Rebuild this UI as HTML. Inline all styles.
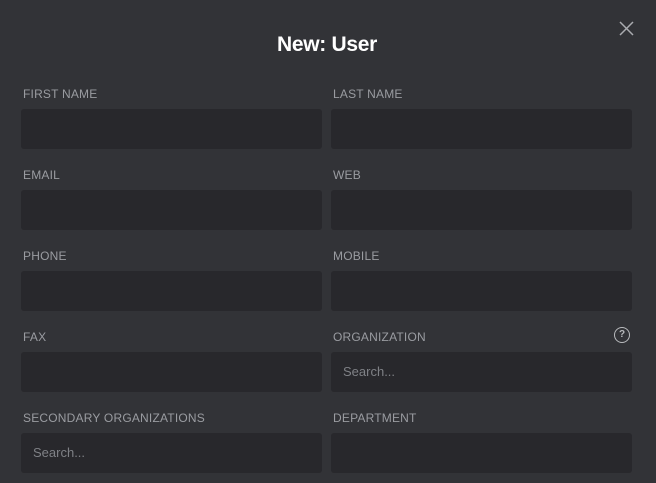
<!DOCTYPE html>
<html><head><style>
body{margin:0;width:656px;height:483px;background:#323337;font-family:"Liberation Sans",sans-serif;overflow:hidden;position:relative}
h1{position:absolute;left:0;width:654px;top:31px;margin:0;text-align:center;color:#fff;font-size:21px;font-weight:bold;line-height:28px;letter-spacing:-0.3px}
.x{position:absolute;left:619px;top:21px}
.l{position:absolute;font-size:12px;color:#9a9ca1;letter-spacing:0.2px;line-height:14px}
.i{position:absolute;width:301px;height:40px;background:#28282c;border-radius:3px;box-sizing:border-box;padding-left:12px;line-height:40px;font-size:13px;color:#7f8186}
.q{position:absolute;left:614px;top:327px;width:14px;height:14px;border:1.3px solid #b8babd;border-radius:50%;font-size:10px;color:#b8babd;text-align:center;line-height:14px;font-weight:bold}
</style></head><body>
<h1>New: User</h1>
<svg class="x" width="15" height="15" viewBox="0 0 15 15"><path d="M1 1L14 14M14 1L1 14" stroke="#aaacb0" stroke-width="1.5"/></svg>
<div class="l" style="left:23px;top:87px">FIRST NAME</div><div class="l" style="left:333px;top:87px">LAST NAME</div>
<div class="i" style="left:21px;top:109px"></div><div class="i" style="left:331px;top:109px"></div>
<div class="l" style="left:23px;top:168px">EMAIL</div><div class="l" style="left:333px;top:168px">WEB</div>
<div class="i" style="left:21px;top:190px"></div><div class="i" style="left:331px;top:190px"></div>
<div class="l" style="left:23px;top:249px">PHONE</div><div class="l" style="left:333px;top:249px">MOBILE</div>
<div class="i" style="left:21px;top:271px"></div><div class="i" style="left:331px;top:271px"></div>
<div class="l" style="left:23px;top:330px">FAX</div><div class="l" style="left:333px;top:330px">ORGANIZATION</div>
<div class="q">?</div>
<div class="i" style="left:21px;top:352px"></div><div class="i" style="left:331px;top:352px">Search...</div>
<div class="l" style="left:23px;top:411px">SECONDARY ORGANIZATIONS</div><div class="l" style="left:333px;top:411px">DEPARTMENT</div>
<div class="i" style="left:21px;top:433px">Search...</div><div class="i" style="left:331px;top:433px"></div>
</body></html>
